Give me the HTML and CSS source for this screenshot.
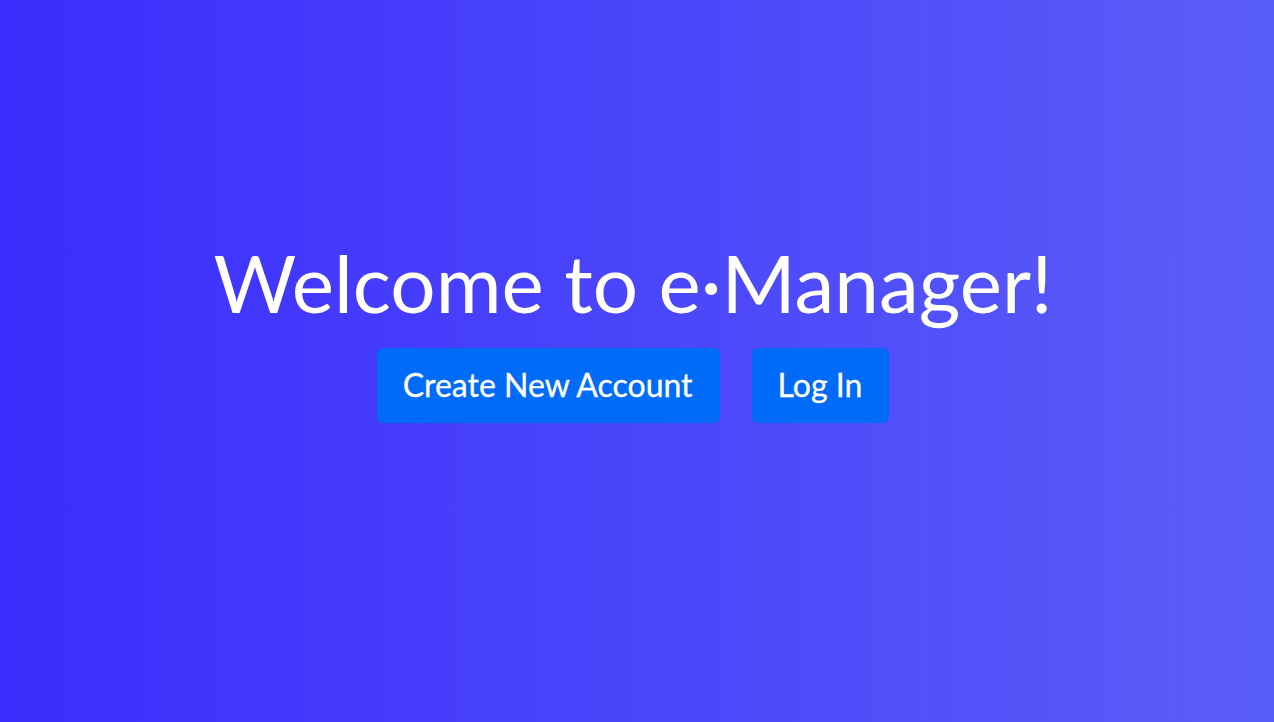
FILE: index.html
```html
<!DOCTYPE html>
<html lang="en">
<head>
<meta charset="utf-8">
<title>e·Manager</title>
<link rel="stylesheet" href="styles.css">
</head>
<body>
<main class="hero">
  <h1 class="hero-title">Welcome to e·Manager!</h1>
  <div class="hero-actions">
    <a class="btn" href="#">Create New Account</a>
    <a class="btn" href="#">Log In</a>
  </div>
</main>
</body>
</html>
```

FILE: styles.css
```css
html, body {
  margin: 0;
  padding: 0;
  height: 100%;
}
body {
  font-family: Lato, "Liberation Sans", sans-serif;
  background: linear-gradient(to right, #3b2dfd, #5a5ef8);
  color: #fff;
}
.hero {
  box-sizing: border-box;
  min-height: 100vh;
  display: flex;
  flex-direction: column;
  align-items: center;
  justify-content: center;
  padding-bottom: 66px;
  padding-right: 8px;
}
.hero-title {
  margin: 0;
  font-size: 80px;
  font-weight: 400;
  line-height: 1.2;
}
.hero-actions {
  display: flex;
  gap: 32px;
  margin-top: 18px;
}
.btn {
  display: block;
  background: #006bf6;
  color: #fff;
  text-decoration: none;
  font-size: 32px;
  line-height: 48px;
  padding: 13px 27px 14px 26px;
  border-radius: 6px;
  -webkit-text-stroke: 0.3px #fff;
}
```
